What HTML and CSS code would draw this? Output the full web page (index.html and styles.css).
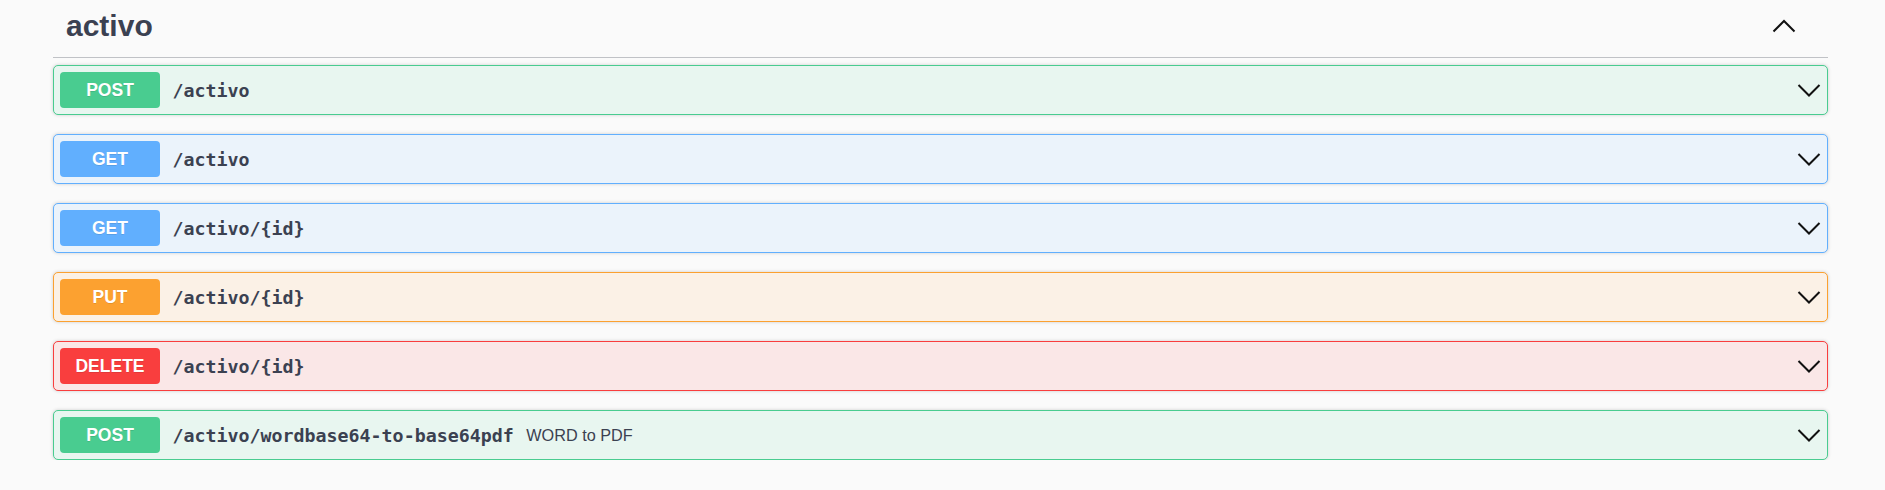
FILE: index.html
```html
<!DOCTYPE html>
<html lang="es">
<head>
<meta charset="utf-8">
<title>activo</title>
<link rel="stylesheet" href="styles.css">
</head>
<body>
<div class="wrapper">
  <section class="tag-section">
    <h3 class="tag-header">
      <span class="tag-name">activo</span>
      <svg class="arrow-up" width="24" height="24" viewBox="0 0 24 24"><polyline points="1.5,17.5 12,7 22.5,17.5" /></svg>
    </h3>
    <div class="ops">
      <div class="opblock post">
        <span class="method">POST</span>
        <span class="path">/activo</span>
        <svg class="arrow" width="24" height="24" viewBox="0 0 24 24"><polyline points="1.5,7 12,17.5 22.5,7" /></svg>
      </div>
      <div class="opblock get">
        <span class="method">GET</span>
        <span class="path">/activo</span>
        <svg class="arrow" width="24" height="24" viewBox="0 0 24 24"><polyline points="1.5,7 12,17.5 22.5,7" /></svg>
      </div>
      <div class="opblock get">
        <span class="method">GET</span>
        <span class="path">/activo/{id}</span>
        <svg class="arrow" width="24" height="24" viewBox="0 0 24 24"><polyline points="1.5,7 12,17.5 22.5,7" /></svg>
      </div>
      <div class="opblock put">
        <span class="method">PUT</span>
        <span class="path">/activo/{id}</span>
        <svg class="arrow" width="24" height="24" viewBox="0 0 24 24"><polyline points="1.5,7 12,17.5 22.5,7" /></svg>
      </div>
      <div class="opblock delete">
        <span class="method">DELETE</span>
        <span class="path">/activo/{id}</span>
        <svg class="arrow" width="24" height="24" viewBox="0 0 24 24"><polyline points="1.5,7 12,17.5 22.5,7" /></svg>
      </div>
      <div class="opblock post">
        <span class="method">POST</span>
        <span class="path">/activo/wordbase64-to-base64pdf</span>
        <span class="desc">WORD to PDF</span>
        <svg class="arrow" width="24" height="24" viewBox="0 0 24 24"><polyline points="1.5,7 12,17.5 22.5,7" /></svg>
      </div>
    </div>
  </section>
</div>
</body>
</html>
```

FILE: styles.css
```css
html, body {
  margin: 0;
  padding: 0;
  background: #fafafa;
}

.wrapper {
  margin-left: 53px;
  width: 1775px;
}

.tag-header {
  margin: 0;
  height: 58px;
  box-sizing: border-box;
  padding: 0 32px 6px 13px;
  border-bottom: 1px solid rgba(59, 65, 81, 0.3);
  display: flex;
  align-items: center;
  font-family: "Liberation Sans", Arial, sans-serif;
  font-size: 30px;
  font-weight: 700;
  color: #3b4151;
}

.tag-name {
  line-height: 34px;
}

.arrow-up {
  margin-left: auto;
}

.arrow-up polyline,
.arrow polyline {
  fill: none;
  stroke: #111;
  stroke-width: 2;
}

.ops {
  padding-top: 7px;
  display: flex;
  flex-direction: column;
  gap: 19px;
}

.opblock {
  height: 50px;
  box-sizing: border-box;
  display: flex;
  align-items: center;
  padding: 0 6px 0 6px;
  border: 1px solid;
  border-radius: 5px;
  box-shadow: 0 0 3.75px rgba(0, 0, 0, 0.19);
}

.method {
  min-width: 100px;
  height: 36px;
  box-sizing: border-box;
  display: flex;
  align-items: center;
  justify-content: center;
  border-radius: 4px;
  font-family: "Liberation Sans", Arial, sans-serif;
  font-size: 17.5px;
  font-weight: 700;
  color: #fff;
  text-shadow: 0 1px 0 rgba(0, 0, 0, 0.1);
}

.path {
  padding: 0 12.5px;
  font-family: "DejaVu Sans Mono", monospace;
  font-size: 18.3px;
  font-weight: 700;
  color: #3b4151;
}

.desc {
  font-family: "Liberation Sans", Arial, sans-serif;
  font-size: 16.25px;
  color: #3b4151;
}

.arrow {
  margin-left: auto;
  margin-right: 0;
}

.post { border-color: #49cc90; background: #e8f6f0; }
.post .method { background: #49cc90; }

.get { border-color: #61affe; background: #ebf3fb; }
.get .method { background: #61affe; }

.put { border-color: #fca130; background: #fbf1e6; }
.put .method { background: #fca130; }

.delete { border-color: #f93e3e; background: #fae7e7; }
.delete .method { background: #f93e3e; }
```
